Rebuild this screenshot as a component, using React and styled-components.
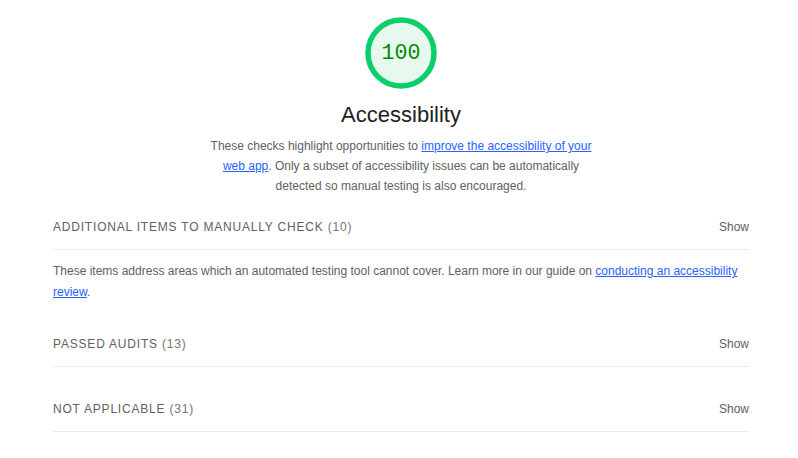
import React from 'react';
import styled, { createGlobalStyle } from 'styled-components';

const GlobalStyle = createGlobalStyle`
    body {
        margin: 0;
        background: #ffffff;
        font-family: "Liberation Sans", Arial, sans-serif;
        color: #212121;
    }
`;

const clumps = [
    {
        title: 'Additional items to manually check',
        count: 10,
        gap: 8,
        description: true,
    },
    { title: 'Passed audits', count: 13, gap: 18 },
    { title: 'Not applicable', count: 31, gap: 19 },
];

const Gauge = () => (
    <GaugeWrap>
        <svg width="72" height="72" viewBox="0 0 72 72">
            <circle cx="36" cy="36" r="33" fill="#e7f9ef" />
            <circle
                cx="36"
                cy="36"
                r="33"
                fill="none"
                stroke="#0cce6b"
                strokeWidth="5.5"
            />
        </svg>
        <GaugeScore>100</GaugeScore>
    </GaugeWrap>
);

const App = () => {
    return (
        <Page>
            <GlobalStyle />
            <Header>
                <Gauge />
                <CategoryTitle>Accessibility</CategoryTitle>
                <Description>
                    These checks highlight opportunities to{' '}
                    <Link href="#">improve the accessibility of your web app</Link>
                    . Only a subset of accessibility issues can be automatically
                    detected so manual testing is also encouraged.
                </Description>
            </Header>
            {clumps.map((c) => (
                <Clump key={c.title} $gap={c.gap}>
                    <ClumpHeader>
                        <ClumpTitle>
                            {c.title} <Count>({c.count})</Count>
                        </ClumpTitle>
                        <Toggle>Show</Toggle>
                    </ClumpHeader>
                    {c.description && (
                        <ClumpDescription>
                            These items address areas which an automated testing
                            tool cannot cover. Learn more in our guide on{' '}
                            <Link href="#">conducting an accessibility review</Link>.
                        </ClumpDescription>
                    )}
                </Clump>
            ))}
        </Page>
    );
};

export default App;

// Styled Components
const Page = styled.div`
    width: 696px;
    padding: 18px 49px 20px 53px;
`;

const Header = styled.div`
    display: flex;
    flex-direction: column;
    align-items: center;
`;

const GaugeWrap = styled.div`
    position: relative;
    width: 72px;
    height: 72px;
    margin-top: -1px;

    svg {
        display: block;
    }
`;

const GaugeScore = styled.div`
    position: absolute;
    inset: 0;
    display: flex;
    align-items: center;
    justify-content: center;
    font-family: "Liberation Mono", "DejaVu Sans Mono", monospace;
    font-size: 21.6px;
    color: #008800;
`;

const CategoryTitle = styled.h2`
    margin: 12px 0 0;
    font-size: 22px;
    line-height: 28px;
    font-weight: normal;
    color: #212121;
`;

const Description = styled.p`
    margin: 7px 0 0;
    width: 400px;
    font-size: 12px;
    line-height: 20px;
    text-align: center;
    color: #616161;
`;

const Link = styled.a`
    color: #2962ff;
    text-decoration: underline;
`;

const Clump = styled.section`
    margin-top: ${(p) => p.$gap}px;
`;

const ClumpHeader = styled.div`
    display: flex;
    align-items: center;
    justify-content: space-between;
    height: 45px;
    border-bottom: 1px solid #ebebeb;
`;

const ClumpTitle = styled.span`
    font-size: 12px;
    letter-spacing: 0.8px;
    text-transform: uppercase;
    color: #616161;
`;

const Count = styled.span`
    color: #757575;
`;

const Toggle = styled.span`
    font-size: 12px;
    color: #616161;
`;

const ClumpDescription = styled.p`
    margin: 11px 0 0;
    font-size: 12px;
    line-height: 21px;
    color: #616161;
`;
